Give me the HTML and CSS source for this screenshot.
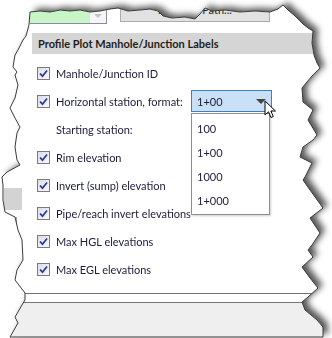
FILE: index.html
```html
<html lang="en">
<head>
    <meta charset="UTF-8">
    <title>Profile Plot Labels</title>
    <link rel="stylesheet" href="styles.css">
</head>
<body>
    <div class="sheet">
        <div class="shadow">
            <div class="torn">

                <div class="topbar">
                    <div class="green-field"></div>
                    <div class="field-arrow"><span class="tri-light"></span></div>
                    <div class="path-button">Save the Path...</div>
                </div>

                <div class="header">Profile Plot Manhole/Junction Labels</div>

                <div class="body">
                    <div class="gutter">
                        <div class="gutter-tab"></div>
                        <div class="gutter-box"></div>
                    </div>

                    <div class="options">
                        <div class="row">
                            <span class="check"><svg width="11" height="11" viewBox="0 0 11 11"><path d="M2 5.5 L4.5 8.2 L9 2.5" /></svg></span>
                            <span class="label">Manhole/Junction ID</span>
                        </div>
                        <div class="row format-row">
                            <span class="check"><svg width="11" height="11" viewBox="0 0 11 11"><path d="M2 5.5 L4.5 8.2 L9 2.5" /></svg></span>
                            <span class="label">Horizontal station, format:</span>
                            <div class="combo">
                                <div class="combo-box">1+00<span class="tri"></span></div>
                                <ul class="combo-list">
                                    <li>100</li>
                                    <li>1+00</li>
                                    <li>1000</li>
                                    <li>1+000</li>
                                </ul>
                                <svg class="cursor" width="14" height="20" viewBox="0 0 14 20">
                                    <path d="M1 1 L1 15 L4.5 11.8 L7 17.5 L9.3 16.5 L6.9 11 L11.5 11 Z" fill="#fff" stroke="#000" stroke-width="1" stroke-linejoin="round"/>
                                </svg>
                            </div>
                        </div>
                        <div class="row">
                            <span class="label">Starting station:</span>
                        </div>
                        <div class="row">
                            <span class="check"><svg width="11" height="11" viewBox="0 0 11 11"><path d="M2 5.5 L4.5 8.2 L9 2.5" /></svg></span>
                            <span class="label">Rim elevation</span>
                        </div>
                        <div class="row">
                            <span class="check"><svg width="11" height="11" viewBox="0 0 11 11"><path d="M2 5.5 L4.5 8.2 L9 2.5" /></svg></span>
                            <span class="label">Invert (sump) elevation</span>
                        </div>
                        <div class="row">
                            <span class="check"><svg width="11" height="11" viewBox="0 0 11 11"><path d="M2 5.5 L4.5 8.2 L9 2.5" /></svg></span>
                            <span class="label">Pipe/reach invert elevations</span>
                        </div>
                        <div class="row">
                            <span class="check"><svg width="11" height="11" viewBox="0 0 11 11"><path d="M2 5.5 L4.5 8.2 L9 2.5" /></svg></span>
                            <span class="label">Max HGL elevations</span>
                        </div>
                        <div class="row">
                            <span class="check"><svg width="11" height="11" viewBox="0 0 11 11"><path d="M2 5.5 L4.5 8.2 L9 2.5" /></svg></span>
                            <span class="label">Max EGL elevations</span>
                        </div>
                    </div>
                </div>

                <div class="footer">
                    <div class="footer-strip"></div>
                    <div class="footer-fill"></div>
                </div>

            </div>
        </div>

        <!-- torn edge outline -->
        <svg class="edge-line" width="332" height="338" viewBox="0 0 332 338">
            <polygon points="30,12 40,11 50,12 60,10 70,11 80,10 90,12 100,11 110,9 118,8 128,11 140,10 150,9 158,11 163,16 172,18 185,17 195,19 200,14 205,8 212,11 225,10 240,12 255,11 270,12 278,9 283,5 288,10 295,16 303,24 308,28 313,31 312,43 314,55 317,63 320,68 312,76 302,88 303,102 313,110 308,120 317,135 313,140 303,147 300,157 312,163 305,177 303,180 310,190 323,208 310,218 320,233 312,245 308,250 313,257 302,267 310,278 318,288 308,297 302,302 305,310 317,320 323,327 323,337 10,337 18,323 15,317 22,305 25,300 25,293 15,280 17,270 23,260 22,240 18,230 15,217 5,212 3,200 3,185 2,177 7,172 20,165 17,160 15,147 17,133 20,127 15,118 10,108 15,98 18,85 15,75 17,72 13,67 15,55 18,50 23,40 26,36 29,25" />
        </svg>
    </div>
</body>
</html>
```

FILE: styles.css
```css
body{
    margin: 0;
    padding: 0;
    background-color: #fff;
    font-family: Lato, "Noto Sans", sans-serif;
}

.sheet{
    position: relative;
    width: 332px;
    height: 338px;
    overflow: hidden;
}
.shadow{
    filter: drop-shadow(5px -3px 3px rgba(0, 0, 0, 0.65));
}
.torn{
    width: 332px;
    height: 338px;
    background-color: #fff;
    clip-path: polygon(30px 12px, 40px 11px, 50px 12px, 60px 10px, 70px 11px, 80px 10px, 90px 12px, 100px 11px, 110px 9px, 118px 8px, 128px 11px, 140px 10px, 150px 9px, 158px 11px, 163px 16px, 172px 18px, 185px 17px, 195px 19px, 200px 14px, 205px 8px, 212px 11px, 225px 10px, 240px 12px, 255px 11px, 270px 12px, 278px 9px, 283px 5px, 288px 10px, 295px 16px, 303px 24px, 308px 28px, 313px 31px, 312px 43px, 314px 55px, 317px 63px, 320px 68px, 312px 76px, 302px 88px, 303px 102px, 313px 110px, 308px 120px, 317px 135px, 313px 140px, 303px 147px, 300px 157px, 312px 163px, 305px 177px, 303px 180px, 310px 190px, 323px 208px, 310px 218px, 320px 233px, 312px 245px, 308px 250px, 313px 257px, 302px 267px, 310px 278px, 318px 288px, 308px 297px, 302px 302px, 305px 310px, 317px 320px, 323px 327px, 323px 337px, 10px 337px, 18px 323px, 15px 317px, 22px 305px, 25px 300px, 25px 293px, 15px 280px, 17px 270px, 23px 260px, 22px 240px, 18px 230px, 15px 217px, 5px 212px, 3px 200px, 3px 185px, 2px 177px, 7px 172px, 20px 165px, 17px 160px, 15px 147px, 17px 133px, 20px 127px, 15px 118px, 10px 108px, 15px 98px, 18px 85px, 15px 75px, 17px 72px, 13px 67px, 15px 55px, 18px 50px, 23px 40px, 26px 36px, 29px 25px);
    display: flex;
    flex-direction: column;
}
.edge-line{
    position: absolute;
    left: 0;
    top: 0;
}
.edge-line polygon{
    fill: none;
    stroke: #3a3a3a;
    stroke-width: 1;
}

/* top strip of the dialog above */
.topbar{
    display: flex;
    align-items: flex-start;
    height: 24px;
    padding-left: 30px;
}
.green-field{
    width: 60px;
    height: 23px;
    background-color: #c8f5c8;
    border-bottom: solid 1px #8a8aa6;
}
.field-arrow{
    width: 16px;
    height: 23px;
    background-color: #f6f6f6;
    border-bottom: solid 1px #8a8aa6;
    border-right: solid 1px #8a8aa6;
    display: flex;
    justify-content: center;
    align-items: center;
}
.tri-light{
    width: 0;
    height: 0;
    border-left: 4px solid transparent;
    border-right: 4px solid transparent;
    border-top: 4px solid #c4c4c4;
    margin-top: 8px;
}
.path-button{
    margin-left: 13px;
    width: 148px;
    height: 21px;
    background-color: #e1e1e1;
    border: solid 1px #adadad;
    border-top: none;
    font-size: 11px;
    color: #1e1e1e;
    text-align: center;
    line-height: 19px;
}

.header{
    margin: 9px 0 0 32px;
    height: 21px;
    background-color: #d5d5d5;
    padding-left: 6px;
    font-size: 11px;
    font-weight: bold;
    line-height: 21px;
    color: #1e1e1e;
}

.body{
    display: flex;
    height: 239px;
}
.gutter{
    width: 37px;
    flex-shrink: 0;
}
.gutter-tab{
    margin-top: 134px;
    margin-left: 4px;
    width: 18px;
    height: 22px;
    background-color: #d3d3d3;
}
.gutter-box{
    margin-top: 7px;
    margin-left: 8px;
    width: 7px;
    height: 8px;
    background-color: #ececec;
    border: solid 1px #a0a0a0;
}

.options{
    flex: 1;
    padding-top: 5px;
}
.row{
    display: flex;
    align-items: center;
    height: 28px;
    padding-left: 19px;
}
.row .check + .label{
    margin-left: 6px;
}
.row .check{
    margin-left: -19px;
}
.check{
    width: 11px;
    height: 11px;
    border: solid 1px #7b7b7b;
    background: linear-gradient(135deg, #dedee6, #f7f7fa);
    display: flex;
}
.check path{
    fill: none;
    stroke: #2b3b94;
    stroke-width: 1.8;
}
.label{
    font-size: 11px;
    color: #1c1c3a;
    white-space: nowrap;
}
.format-row .label{
    width: 135px;
}

.combo{
    position: relative;
}
.combo-box{
    width: 74px;
    height: 20px;
    padding-left: 5px;
    background-color: #c9e0f7;
    border: solid 1px #3d7fc1;
    font-size: 11px;
    line-height: 21px;
    color: #1c1c3a;
    position: relative;
}
.tri{
    position: absolute;
    right: 5px;
    top: 8px;
    width: 0;
    height: 0;
    border-left: 5px solid transparent;
    border-right: 5px solid transparent;
    border-top: 5px solid #444;
}
.combo-list{
    position: absolute;
    left: 0;
    top: 23px;
    width: 77px;
    margin: 0;
    padding: 3px 0 1px 0;
    list-style: none;
    background-color: #fff;
    border: solid 1px #8c8f96;
    box-shadow: 1px 1px 2px rgba(0, 0, 0, 0.2);
}
.combo-list li{
    height: 24px;
    line-height: 24px;
    padding-left: 5px;
    font-size: 11px;
    color: #1c1c3a;
}
.cursor{
    position: absolute;
    left: 73px;
    top: 10px;
}

.footer{
    flex: 1;
    display: flex;
    flex-direction: column;
}
.footer-strip{
    height: 8px;
    border-top: solid 1px #737373;
    border-bottom: solid 1px #737373;
}
.footer-fill{
    flex: 1;
    background-color: #efefef;
}
```
